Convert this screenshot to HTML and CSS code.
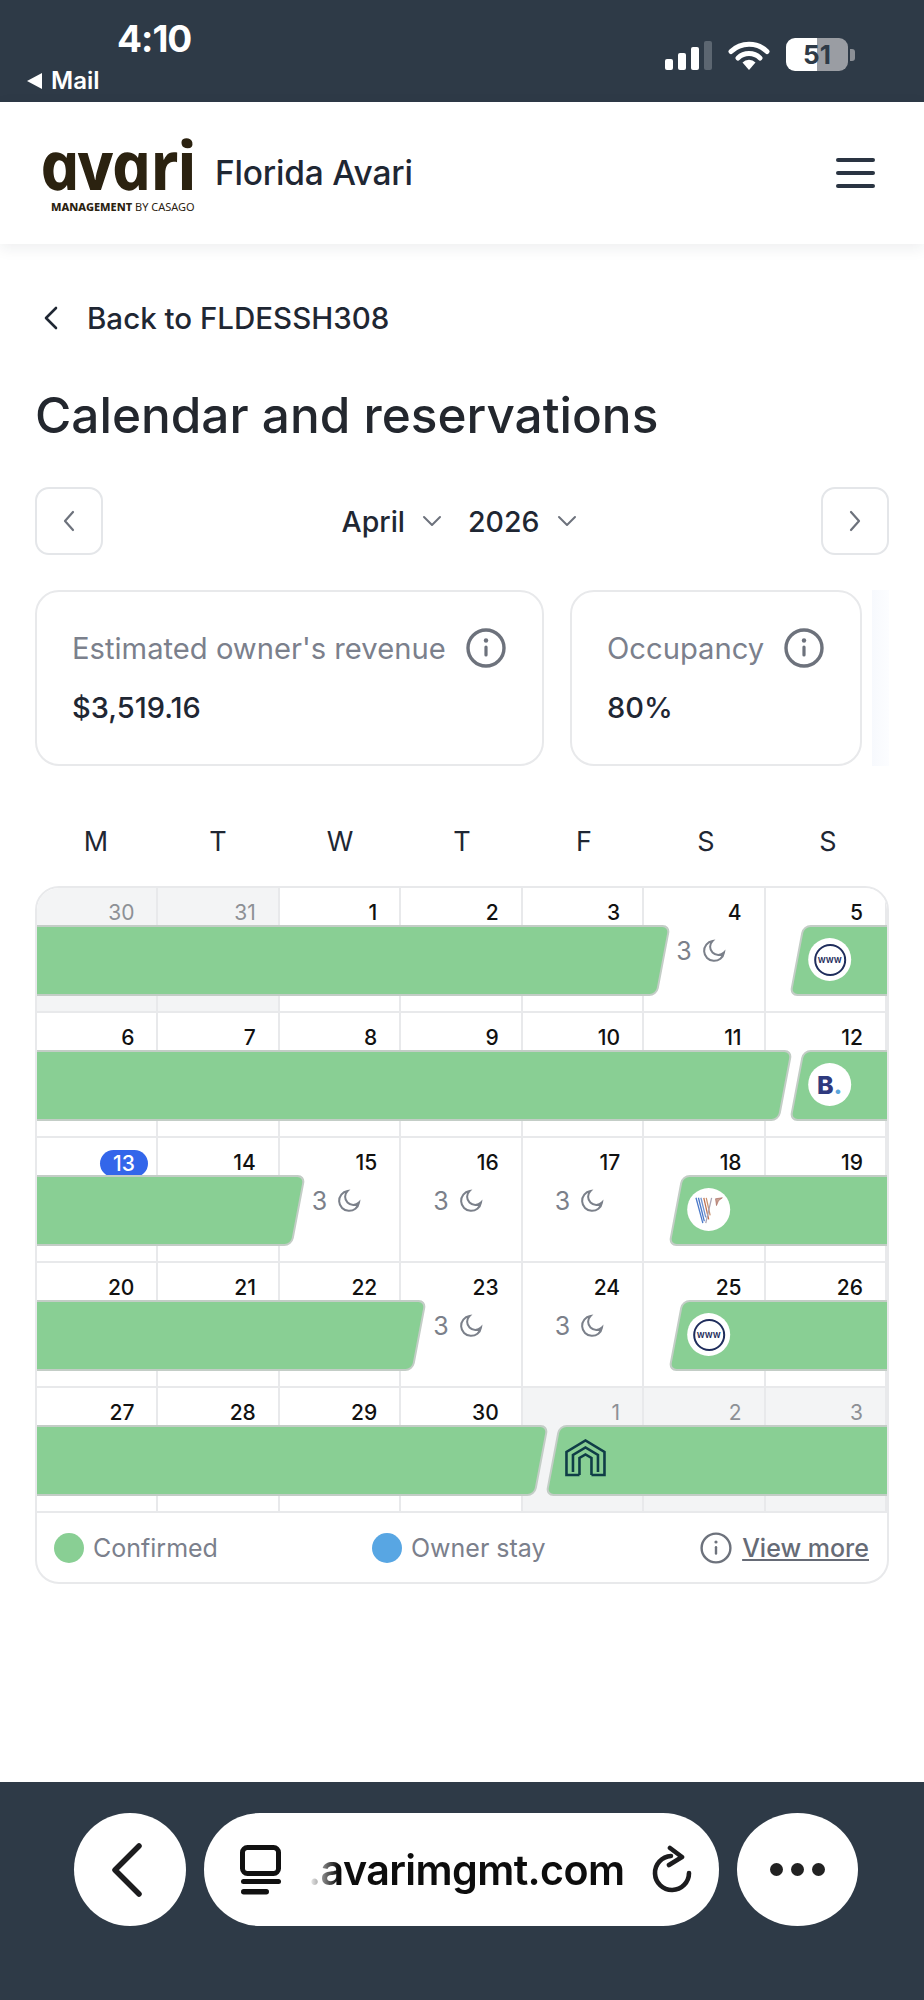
FILE: index.html
```html
<!DOCTYPE html>
<html lang="en">
<head>
    <meta charset="UTF-8">
    <title>Calendar and reservations</title>
    <link rel="stylesheet" href="styles.css">
</head>
<body>
    <div class="status-bar">
        <div class="status-left">
            <div class="clock">4:10</div>
            <div class="return-app"><span class="return-arrow"></span>Mail</div>
        </div>
        <div class="status-right">
            <div class="signal"><i></i><i></i><i></i><i class="dim"></i></div>
            <svg class="wifi" viewBox="0 0 42 30"><path d="M3 11.5a26 26 0 0 1 36 0M10 18a16 16 0 0 1 22 0" fill="none" stroke="#fff" stroke-width="5" stroke-linecap="round"/><path d="M14.500 22.500a9 9 0 0 1 13 0L21 30z" fill="#fff"/></svg>
            <div class="battery"><span>51</span></div>
            <div class="battery-nub"></div>
        </div>
    </div>

    <header class="site-header">
        <div class="logo">
            <div class="logo-word">avari</div>
            <div class="logo-sub"><b>MANAGEMENT</b> BY CASAGO</div>
        </div>
        <div class="site-name">Florida Avari</div>
        <div class="hamburger"><i></i><i></i><i></i></div>
    </header>

    <main class="content">
        <a class="back-link">
            <svg class="back-chevron" viewBox="0 0 14 24"><path d="M12 2 2 12l10 10" fill="none" stroke="#1f2733" stroke-width="2.600" stroke-linecap="round" stroke-linejoin="round"/></svg>
            Back to FLDESSH308
        </a>
        <h1>Calendar and reservations</h1>

        <div class="month-nav">
            <button class="nav-btn"><svg viewBox="0 0 14 24"><path d="M11 3 3 12l8 9" fill="none" stroke="#6d727c" stroke-width="2.200" stroke-linecap="round" stroke-linejoin="round"/></svg></button>
            <div class="month-picker">
                <span>April</span>
                <svg class="caret" viewBox="0 0 20 12"><path d="m2 2 8 8 8-8" fill="none" stroke="#6d727c" stroke-width="2" stroke-linecap="round" stroke-linejoin="round"/></svg>
                <span class="year">2026</span>
                <svg class="caret" viewBox="0 0 20 12"><path d="m2 2 8 8 8-8" fill="none" stroke="#6d727c" stroke-width="2" stroke-linecap="round" stroke-linejoin="round"/></svg>
            </div>
            <button class="nav-btn"><svg viewBox="0 0 14 24"><path d="m3 3 8 9-8 9" fill="none" stroke="#6d727c" stroke-width="2.200" stroke-linecap="round" stroke-linejoin="round"/></svg></button>
        </div>

        <div class="stats">
            <div class="stat-card stat-revenue">
                <div class="stat-label">Estimated owner's revenue
                    <svg class="info" viewBox="0 0 40 40"><circle cx="20" cy="20" r="18" fill="none" stroke="#6d727c" stroke-width="3.400"/><circle cx="20" cy="12.500" r="2.200" fill="#6d727c"/><rect x="18.400" y="17.500" width="3.200" height="11" rx="1.600" fill="#6d727c"/></svg>
                </div>
                <div class="stat-value">$3,519.16</div>
            </div>
            <div class="stat-card stat-occupancy">
                <div class="stat-label">Occupancy
                    <svg class="info" viewBox="0 0 40 40"><circle cx="20" cy="20" r="18" fill="none" stroke="#6d727c" stroke-width="3.400"/><circle cx="20" cy="12.500" r="2.200" fill="#6d727c"/><rect x="18.400" y="17.500" width="3.200" height="11" rx="1.600" fill="#6d727c"/></svg>
                </div>
                <div class="stat-value">80%</div>
            </div>
            <div class="stats-fade"></div>
        </div>

        <div class="weekdays">
            <div>M</div><div>T</div><div>W</div><div>T</div><div>F</div><div>S</div><div>S</div>
        </div>

        <div class="calendar">
            <div class="week">
                <div class="day other"><span class="num">30</span></div>
                <div class="day other"><span class="num">31</span></div>
                <div class="day"><span class="num">1</span></div>
                <div class="day"><span class="num">2</span></div>
                <div class="day"><span class="num">3</span></div>
                <div class="day"><span class="num">4</span>
                    <div class="nights">3 <svg class="moon" viewBox="0 0 24 24"><path d="M22 13.500A10 10 0 1 1 10.500 2a8 8 0 0 0 11.500 11.500z"/></svg></div>
                </div>
                <div class="day"><span class="num">5</span></div>
                <div class="bar" style="left:-40px;width:667px"></div>
                <div class="bar" style="left:759px;width:200px">
                    <div class="channel www"><span>www</span></div>
                </div>
            </div>
            <div class="week">
                <div class="day"><span class="num">6</span></div>
                <div class="day"><span class="num">7</span></div>
                <div class="day"><span class="num">8</span></div>
                <div class="day"><span class="num">9</span></div>
                <div class="day"><span class="num">10</span></div>
                <div class="day"><span class="num">11</span></div>
                <div class="day"><span class="num">12</span></div>
                <div class="bar" style="left:-40px;width:789px"></div>
                <div class="bar" style="left:759px;width:200px">
                    <div class="channel booking">B<i>.</i></div>
                </div>
            </div>
            <div class="week">
                <div class="day"><span class="num">&nbsp;</span><span class="today">13</span></div>
                <div class="day"><span class="num">14</span></div>
                <div class="day"><span class="num">15</span>
                    <div class="nights">3 <svg class="moon" viewBox="0 0 24 24"><path d="M22 13.500A10 10 0 1 1 10.500 2a8 8 0 0 0 11.500 11.500z"/></svg></div>
                </div>
                <div class="day"><span class="num">16</span>
                    <div class="nights">3 <svg class="moon" viewBox="0 0 24 24"><path d="M22 13.500A10 10 0 1 1 10.500 2a8 8 0 0 0 11.500 11.500z"/></svg></div>
                </div>
                <div class="day"><span class="num">17</span>
                    <div class="nights">3 <svg class="moon" viewBox="0 0 24 24"><path d="M22 13.500A10 10 0 1 1 10.500 2a8 8 0 0 0 11.500 11.500z"/></svg></div>
                </div>
                <div class="day"><span class="num">18</span></div>
                <div class="day"><span class="num">19</span></div>
                <div class="bar" style="left:-40px;width:302px"></div>
                <div class="bar" style="left:638px;width:320px">
                    <div class="channel">
                        <svg viewBox="0 0 44 44" width="43" height="43" fill="none" stroke-width="1.300">
                            <path d="m9 10 7 26" stroke="#4a78c8"/>
                            <path d="m11.500 10 6 24" stroke="#4a78c8"/>
                            <path d="m14 10 5 20" stroke="#6f92cf"/>
                            <path d="m17 10 5 22" stroke="#c0714f"/>
                            <path d="m19.500 10 4 18" stroke="#c9936f"/>
                            <path d="m25 10-6 26" stroke="#a9a3b3"/>
                            <path d="m29 11 7-1-4 3-2 5z" stroke="#a05a50" fill="#c9a090" stroke-width=".6"/>
                        </svg>
                    </div>
                </div>
            </div>
            <div class="week">
                <div class="day"><span class="num">20</span></div>
                <div class="day"><span class="num">21</span></div>
                <div class="day"><span class="num">22</span></div>
                <div class="day"><span class="num">23</span>
                    <div class="nights">3 <svg class="moon" viewBox="0 0 24 24"><path d="M22 13.500A10 10 0 1 1 10.500 2a8 8 0 0 0 11.500 11.500z"/></svg></div>
                </div>
                <div class="day"><span class="num">24</span>
                    <div class="nights">3 <svg class="moon" viewBox="0 0 24 24"><path d="M22 13.500A10 10 0 1 1 10.500 2a8 8 0 0 0 11.500 11.500z"/></svg></div>
                </div>
                <div class="day"><span class="num">25</span></div>
                <div class="day"><span class="num">26</span></div>
                <div class="bar" style="left:-40px;width:423px"></div>
                <div class="bar" style="left:638px;width:320px">
                    <div class="channel www"><span>www</span></div>
                </div>
            </div>
            <div class="week">
                <div class="day"><span class="num">27</span></div>
                <div class="day"><span class="num">28</span></div>
                <div class="day"><span class="num">29</span></div>
                <div class="day"><span class="num">30</span></div>
                <div class="day other"><span class="num">1</span></div>
                <div class="day other"><span class="num">2</span></div>
                <div class="day other"><span class="num">3</span></div>
                <div class="bar" style="left:-40px;width:545px"></div>
                <div class="bar" style="left:515px;width:440px">
                    <svg class="house" viewBox="0 0 42 38" fill="none" stroke="#0f3d47" stroke-width="2.600">
                        <path d="M15 36H2V13L21 1.500 40 13v23H27"/>
                        <path d="M8.500 33V16L21 8.500 33.500 16v17"/>
                        <path d="M15 36V19l6-3.500 6 3.500v17"/>
                    </svg>
                </div>
            </div>
            <div class="legend">
                <div class="legend-item legend-confirmed"><span class="dot green"></span>Confirmed</div>
                <div class="legend-item legend-owner"><span class="dot blue"></span>Owner stay</div>
                <div class="legend-more">
                    <svg class="info-small" viewBox="0 0 40 40"><circle cx="20" cy="20" r="18" fill="none" stroke="#6d727c" stroke-width="3"/><circle cx="20" cy="12.500" r="2" fill="#6d727c"/><rect x="18.500" y="17.500" width="3" height="11" rx="1.500" fill="#6d727c"/></svg>
                    <a>View more</a>
                </div>
            </div>
        </div>
    </main>

    <footer class="browser-bar">
        <div class="round-btn back-btn">
            <svg viewBox="0 0 32 54" width="32" height="54"><path d="M28 3 4 27l24 24" fill="none" stroke="#1c1c1e" stroke-width="5.500" stroke-linecap="round" stroke-linejoin="round"/></svg>
        </div>
        <div class="url-pill">
            <svg class="tabs-icon" viewBox="0 0 42 50" width="42" height="50"><rect x="2.500" y="2.500" width="36" height="26" rx="5" fill="none" stroke="#111" stroke-width="5"/><rect x="1" y="34" width="40" height="5" rx="2.500" fill="#111"/><rect x="1" y="44" width="28" height="5.500" rx="2.700" fill="#111"/></svg>
            <span class="url-text">.avarimgmt.com</span>
            <svg class="reload" viewBox="0 0 42 50" width="42" height="50"><path d="M20 11A17 17 0 1 0 38 28" fill="none" stroke="#1c1c1e" stroke-width="4.600" stroke-linecap="round"/><path d="m19 3 12 9-13 8" fill="none" stroke="#1c1c1e" stroke-width="4.600" stroke-linecap="round" stroke-linejoin="round"/></svg>
        </div>
        <div class="round-btn more-btn"><i></i><i></i><i></i></div>
    </footer>
</body>
</html>
```

FILE: styles.css
```css
* {
    box-sizing: border-box;
}
body {
    margin: 0;
    min-height: 2000px;
    display: flex;
    flex-direction: column;
    background-color: #fff;
    color: #1f2733;
    font-family: Inter, "Noto Sans", sans-serif;
}

/* phone status bar */
.status-bar {
    height: 102px;
    padding: 21px 69px 0 27px;
    display: flex;
    justify-content: space-between;
    background-color: #2e3a47;
    color: #fff;
}
.clock {
    margin-left: 90px;
    font-size: 37px;
    line-height: 36px;
    font-weight: 700;
    letter-spacing: -1px;
}
.return-app {
    margin-top: 10px;
    display: flex;
    align-items: center;
    font-size: 24px;
    line-height: 27px;
    font-weight: 600;
}
.return-arrow {
    margin-right: 9px;
    border-top: 8px solid transparent;
    border-bottom: 8px solid transparent;
    border-right: 15px solid #fff;
}
.status-right {
    padding-top: 17px;
    display: flex;
    align-items: flex-start;
}
.signal {
    height: 26px;
    margin-top: 6px;
    display: flex;
    align-items: flex-end;
    gap: 5px;
}
.signal i {
    width: 8px;
    border-radius: 2px;
    background-color: #fff;
}
.signal i:nth-child(1) { height: 11px; }
.signal i:nth-child(2) { height: 17px; }
.signal i:nth-child(3) { height: 23px; }
.signal i:nth-child(4) { height: 29px; margin-top: -3px; }
.signal i.dim {
    background-color: #5c6671;
}
.wifi {
    width: 42px;
    height: 30px;
    margin: 2px 0 0 16px;
}
.battery {
    width: 62px;
    height: 33px;
    margin-left: 16px;
    border-radius: 9px;
    text-align: center;
    background: linear-gradient(90deg, #fff 50%, #9a9da3 50%);
    color: #2e3a47;
    font-size: 26px;
    line-height: 33px;
    font-weight: 700;
}
.battery-nub {
    width: 5px;
    height: 12px;
    margin: 11px 0 0 2px;
    border-radius: 0 3px 3px 0;
    background-color: #8b8f96;
}

/* site header */
.site-header {
    height: 142px;
    padding: 0 49px 0 44px;
    display: flex;
    align-items: center;
    background-color: #fff;
    box-shadow: 0 4px 14px rgba(30, 40, 50, 0.08);
    position: relative;
}
.logo {
    width: 156px;
    color: #2b2210;
}
.logo-word {
    height: 64px;
    margin-top: -2px;
    margin-left: 1px;
    font-family: "Open Sans", sans-serif;
    font-size: 68px;
    line-height: 64px;
    font-weight: 700;
    font-style: italic;
    letter-spacing: -1.800px;
    transform: skewX(12deg);
    transform-origin: 0 100%;
}
.logo-sub {
    margin: 5px 0 0 7px;
    font-family: "Noto Sans", sans-serif;
    font-size: 11px;
    line-height: 12px;
    white-space: nowrap;
}
.logo-sub b {
    font-weight: 800;
}
.site-name {
    margin-left: 15px;
    font-size: 33.500px;
    font-weight: 500;
    letter-spacing: -0.200px;
    flex: 1;
}
.hamburger {
    width: 39px;
    display: flex;
    flex-direction: column;
    gap: 9px;
}
.hamburger i {
    height: 4px;
    border-radius: 2px;
    background-color: #2a3442;
}

/* page content */
.content {
    flex: 1;
    padding: 0 35px;
}
.back-link {
    margin-top: 56px;
    height: 36px;
    display: flex;
    align-items: center;
    font-size: 29.500px;
    font-weight: 500;
}
.back-chevron {
    width: 14px;
    height: 24px;
    margin: 0 29px 0 9px;
}
h1 {
    margin: 50px 0 0;
    font-size: 49.500px;
    line-height: 58px;
    font-weight: 500;
    color: #23272e;
}
.month-nav {
    margin-top: 43px;
    display: flex;
    align-items: center;
    justify-content: space-between;
}
.nav-btn {
    width: 68px;
    height: 68px;
    padding: 0;
    display: flex;
    align-items: center;
    justify-content: center;
    background-color: #fff;
    border: 2px solid #e4e6e9;
    border-radius: 14px;
}
.nav-btn svg {
    width: 14px;
    height: 24px;
}
.month-picker {
    margin-right: 6px;
    display: flex;
    align-items: center;
    font-size: 28.500px;
    font-weight: 500;
}
.caret {
    width: 20px;
    height: 12px;
    margin-left: 17px;
}
.year {
    margin-left: 26px;
}
.stats {
    margin-top: 35px;
    height: 176px;
    display: flex;
}
.stat-card {
    padding: 36px 36px 0 35px;
    background-color: #fff;
    border: 2px solid #e8e9eb;
    border-radius: 24px;
}
.stat-revenue {
    width: 509px;
}
.stat-occupancy {
    width: 292px;
    margin-left: 26px;
}
.stats-fade {
    width: 17px;
    margin-left: 10px;
    background: linear-gradient(90deg, #f7f9fd, #fcfdff);
}
.stat-label {
    height: 40px;
    display: flex;
    align-items: center;
    justify-content: space-between;
    font-size: 29.200px;
    color: #7b808c;
    white-space: nowrap;
}
.info {
    width: 40px;
    height: 40px;
    flex: none;
}
.stat-value {
    margin-top: 22px;
    font-size: 29px;
    line-height: 36px;
    font-weight: 500;
}
.weekdays {
    margin-top: 56px;
    height: 40px;
    display: grid;
    grid-template-columns: repeat(7, 1fr);
    text-align: center;
    font-size: 27px;
    line-height: 40px;
}

/* calendar */
.calendar {
    margin-top: 24px;
    border: 2px solid #e8e9eb;
    border-radius: 24px;
    overflow: hidden;
}
.week {
    position: relative;
    height: 125px;
    display: grid;
    grid-template-columns: repeat(7, 1fr);
    border-bottom: 2px solid #e8e9eb;
}
.day {
    position: relative;
    padding: 12px 22px 0 0;
    text-align: right;
    border-right: 2px solid #e8e9eb;
    background-color: #fff;
}
.day:last-of-type {
    border-right: none;
}
.day.other {
    background-color: #f3f4f5;
}
.num {
    display: block;
    font-size: 21px;
    line-height: 26px;
    font-weight: 500;
    color: #111;
}
.other .num {
    color: #8d9095;
    font-weight: 400;
}
.today {
    position: absolute;
    top: 12px;
    left: 63px;
    width: 48px;
    height: 27px;
    border-radius: 14px;
    text-align: center;
    background-color: #3366ea;
    color: #fff;
    font-size: 21px;
    line-height: 27px;
    font-weight: 500;
}
.nights {
    margin: 9px 0 0 32px;
    display: flex;
    align-items: center;
    gap: 10px;
    font-size: 25px;
    line-height: 32px;
    color: #7b808a;
}
.moon {
    width: 24px;
    height: 24px;
    fill: none;
    stroke: #7b808a;
    stroke-width: 2;
}
.bar {
    position: absolute;
    top: 37px;
    height: 71px;
    padding-left: 10px;
    display: flex;
    align-items: center;
    background-color: #89cf94;
    border: 2px solid #c3cdc6;
    border-radius: 8px;
    transform: skewX(-10.700deg);
}
.channel {
    width: 43px;
    height: 43px;
    margin-top: -3px;
    display: flex;
    align-items: center;
    justify-content: center;
    border-radius: 50%;
    background-color: #fff;
    transform: skewX(10.700deg);
}
.www span {
    width: 32px;
    height: 32px;
    display: block;
    border: 2px solid #1f2d5c;
    border-radius: 50%;
    text-align: center;
    color: #1f2d5c;
    font-size: 9.500px;
    line-height: 28px;
    font-weight: 600;
}
.booking {
    color: #2f3a7e;
    font-size: 25px;
    font-weight: 800;
}
.booking i {
    color: #5aa6dc;
    font-style: normal;
}
.house {
    width: 42px;
    height: 38px;
    margin-top: -5px;
    transform: skewX(10.700deg);
}
.legend {
    height: 69px;
    position: relative;
    display: flex;
    align-items: center;
    font-size: 25px;
    color: #7b808c;
}
.legend-item {
    display: flex;
    align-items: center;
}
.legend-confirmed {
    width: 318px;
    margin-left: 17px;
}
.dot {
    width: 30px;
    height: 30px;
    margin-right: 9px;
    border-radius: 50%;
}
.dot.green {
    background-color: #89cf94;
}
.dot.blue {
    background-color: #58a6e3;
}
.legend-more {
    margin-left: auto;
    margin-right: 18px;
    display: flex;
    align-items: center;
    gap: 10px;
}
.info-small {
    width: 32px;
    height: 32px;
}
.legend-more a {
    font-weight: 500;
    text-decoration: underline;
    color: #666b76;
}

/* browser toolbar */
.browser-bar {
    height: 218px;
    padding: 31px 65px 0 74px;
    display: flex;
    align-items: flex-start;
    gap: 18px;
    background-color: #2e3a47;
}
.round-btn {
    height: 113px;
    display: flex;
    align-items: center;
    justify-content: center;
    background-color: #fff;
    border-radius: 50%;
}
.back-btn {
    width: 112px;
    padding-right: 6px;
}
.more-btn {
    width: 121px;
    gap: 8px;
}
.more-btn i {
    width: 13px;
    height: 13px;
    border-radius: 50%;
    background-color: #222;
}
.url-pill {
    width: 515px;
    height: 113px;
    padding: 0 26px 0 36px;
    display: flex;
    align-items: center;
    background-color: #fff;
    border-radius: 56px;
    color: #0d0d0d;
}
.url-text {
    margin-left: 26px;
    font-size: 41.200px;
    font-weight: 600;
    flex: 1;
    letter-spacing: -0.600px;
    white-space: nowrap;
    -webkit-mask-image: linear-gradient(90deg, transparent, #000 30px);
    mask-image: linear-gradient(90deg, transparent, #000 30px);
}
```
